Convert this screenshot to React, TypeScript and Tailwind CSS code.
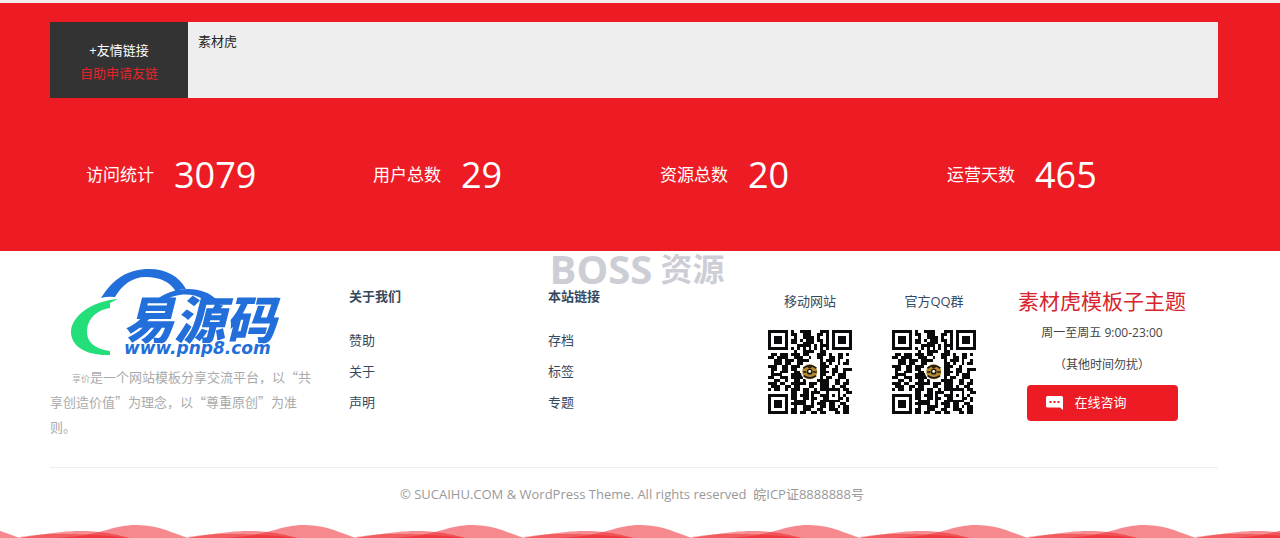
const CJK = "font-['Noto_Sans_CJK_SC',sans-serif]"

const stats = [
  { label: '访问统计', value: 3079 },
  { label: '用户总数', value: 29 },
  { label: '资源总数', value: 20 },
  { label: '运营天数', value: 465 },
]

const linkGroups = [
  { title: '关于我们', links: ['赞助', '关于', '声明'] },
  { title: '本站链接', links: ['存档', '标签', '专题'] },
]

const qrRows = [
  '#######.#..####...###.#######',
  '#.....#.##..###..##.#.#.....#',
  '#.###.#..#..####.#..#.#.###.#',
  '#.###.#.##.#.###.##.#.#.###.#',
  '#.###.#.##..####..#.#.#.###.#',
  '#.....#...#####.#.###.#.....#',
  '#######.#.#.#.#.#.#.#.#######',
  '.........#..####..##.........',
  '.##.###.###.##...###.#..##.#.',
  '##.####..###..#..##..##.##...',
  '..###.###.####....#.###.#..#.',
  '..###.##..##......##.#..#.##.',
  '###..##.###.......###..#.....',
  '.##..##.##........##..##..###',
  '.#..###..##.......###.##..#..',
  '.####...####......##..#.###..',
  '##..###.####......#.##..###..',
  '..##..#..##.#....####..##..#.',
  '###.##..#####.###.###..##.##.',
  '.###..##.##...##..###.#..##..',
  '#.##..#.###.##..#.#######.##.',
  '........##..##.###..#...#..##',
  '#######.##.###.#..###.#.#.#..',
  '#.....#.##..##.##..##...##.#.',
  '#.###.#..####..#..#######..#.',
  '#.###.#.#####..#.###.##..##..',
  '#.###.#..#..####..##.##.#.##.',
  '#.....#.##..###..##..###..##.',
  '#######.##.##..##.##...##.##.',
]

function QrCode({ label }: { label: string }) {
  return (
    <svg role="img" aria-label={label} viewBox="0 0 29 29" className="mt-[19px] size-[84px]">
      <path
        fill="#0b0b0d"
        shapeRendering="crispEdges"
        d={qrRows
          .flatMap((row, y) => [...row].map((c, x) => (c === '#' ? `M${x} ${y}h1v1h-1z` : '')))
          .join('')}
      />
      <circle cx="14.4" cy="14.4" r="3.1" fill="#fff" />
      <circle cx="14.4" cy="14.4" r="2.6" fill="#b58a35" />
      <path
        d="M12.2 13.2q2.2-1.8 4.5 0M12.3 15.8q2.2 1.4 4.3 0M12.1 14.5h1.2M15.6 14.5h1.2M13.4 12.3l1 .7 1-.7"
        fill="none"
        stroke="#221a10"
        strokeWidth=".6"
      />
      <circle cx="14.4" cy="14.4" r="1" fill="#221a10" />
      <circle cx="14.4" cy="14.3" r=".5" fill="#fff" />
    </svg>
  )
}

function Logo() {
  return (
    <svg viewBox="0 0 216 92" className="ml-5 h-[92px] w-[216px]">
      <path d="M31 33C43 13 59 4 79 4c17 0 30 7 37 20q-7 0-10 3C101 17 89 12 76 12c-14 0-24 8-31 20q-7-1-14 1z" fill="#226fdb" />
      <path d="M85 36c17-15 48-17 63 0q-9-1-14-1c-11-8-29-7-40 1z" fill="#226fdb" />
      <path d="M48 34C22 36 1 51 1 67c0 14 15 24 39 23v-4c-16-2-24-10-23-21 1-12 10-20 23-22v-5z" fill="#24df79" />
      <text x="53" y="74" fontSize="51" fontWeight="900" fontStyle="italic" fill="#226fdb" fontFamily="'Noto Sans CJK SC', sans-serif">
        易源码
      </text>
      <text x="54" y="89" fontSize="17" fontWeight="700" fontStyle="italic" fill="#226fdb" stroke="#fff" strokeWidth="2" paintOrder="stroke" fontFamily="'DejaVu Sans', sans-serif">
        www.pnp8.com
      </text>
    </svg>
  )
}

function Waves() {
  return (
    <svg aria-hidden="true" className="block h-[14px] w-full">
      <defs>
        <pattern id="wave" width="168" height="14" patternUnits="userSpaceOnUse" x="20">
          <path d="M0 14C30 9 45 7 62 7S90 9 110 14z" fill="#ed1c24" fillOpacity=".5" />
          <path d="M0 13C24 9 36 10 48 10s38 1 60 4H0z" fill="#ed1c24" fillOpacity=".45" />
          <path d="M36 14C82 12 90 1 117 1c22 0 38 9 51 13z" fill="#ed1c24" fillOpacity=".52" />
        </pattern>
      </defs>
      <rect width="100%" height="14" fill="url(#wave)" />
    </svg>
  )
}

export default function App() {
  return (
    <div className="relative bg-white font-['Open_Sans','Noto_Sans_CJK_SC',sans-serif] text-[13px] leading-5 text-[#34495e]">
      <section className="h-[251px] border-t-[3px] border-[#f4eded] bg-[#ed1c24] pt-[19px] pr-[62px] pl-[50px]">
        <div className="flex h-[76px] bg-[#eee]">
          <div className="flex w-[138px] flex-col items-center justify-center gap-[3px] bg-[#333] pt-0.5">
            <span className="text-white">+友情链接</span>
            <a href="#" className="text-[#e3232b]">自助申请友链</a>
          </div>
          <a href="#" className="px-[10px] pt-[9px] text-[#222]">素材虎</a>
        </div>
        <div className="mt-[52px] grid grid-cols-4 pr-5 text-white">
          {stats.map((s) => (
            <div key={s.label} className="flex items-center gap-5 pl-9">
              <span className="text-[17px]">{s.label}</span>
              <span className="text-4xl leading-[50px]">{s.value}</span>
            </div>
          ))}
        </div>
      </section>

      <footer>
        <div className="pr-[62px] pl-[50px]">
          <div className="flex h-[217px] border-b border-[#eee]">
            <div className="w-[299px] pt-[14px]">
              <Logo />
              <p className={`mt-[7px] w-[268px] indent-[22px] leading-[25px] text-[#aaa] ${CJK}`} lang="zh-CN">
                <span className="text-[9px] leading-none">享价</span>是一个网站模板分享交流平台，以“共享创造价值”为理念，以“尊重原创”为准则。
              </p>
            </div>

            {linkGroups.map((group) => (
              <nav key={group.title} className="w-[199px] pt-[35px]">
                <h3 className="font-bold">{group.title}</h3>
                <ul className="mt-6 space-y-[11px]">
                  {group.links.map((link) => (
                    <li key={link}>
                      <a href="#">{link}</a>
                    </li>
                  ))}
                </ul>
              </nav>
            ))}

            <div className="ml-auto flex gap-10 pt-10">
              {['移动网站', '官方QQ群'].map((label) => (
                <div key={label} className="flex flex-col items-center">
                  <span className="w-[84px] text-center">{label}</span>
                  <QrCode label={label} />
                </div>
              ))}
            </div>

            <div className="ml-[34px] flex w-[208px] flex-col items-center pt-[34px] pr-[24px] text-xs text-[#444]">
              <h2 className="text-[21px] leading-8 whitespace-nowrap text-[#d9232d]">素材虎模板子主题</h2>
              <p className="mt-1 leading-6">周一至周五 9:00-23:00</p>
              <p className="mt-2 leading-6">（其他时间勿扰）</p>
              <button type="button" className="mt-2 flex h-9 w-[151px] items-center gap-3 rounded bg-[#ed1c24] pl-[19px] text-[13px] text-white">
                <svg viewBox="0 0 17 14" className="h-[14px] w-[17px]" aria-hidden="true">
                  <path d="M1.5 0h14A1.5 1.5 0 0 1 17 1.5V14l-3-2.5H1.5A1.5 1.5 0 0 1 0 10V1.5A1.5 1.5 0 0 1 1.5 0z" fill="#fff" />
                  <path d="M3.5 5h2v2h-2zM7.5 5h2v2h-2zM11.5 5h2v2h-2z" fill="#ed1c24" />
                </svg>
                在线咨询
              </button>
            </div>
          </div>
        </div>
        <p className="pt-4 pr-4 pb-5 text-center text-[#999]">
          © SUCAIHU.COM &amp; WordPress Theme. All rights reserved&nbsp; 皖ICP证8888888号
        </p>
        <Waves />
      </footer>

      {/* watermark */}
      <div className="pointer-events-none absolute inset-x-0 top-[249px] flex items-center justify-center gap-2 pr-1.5 leading-10 font-bold text-[#cdced5]">
        <span className="text-[40px]">BOSS</span>
        <span className="text-[32px]">资源</span>
      </div>
    </div>
  )
}
